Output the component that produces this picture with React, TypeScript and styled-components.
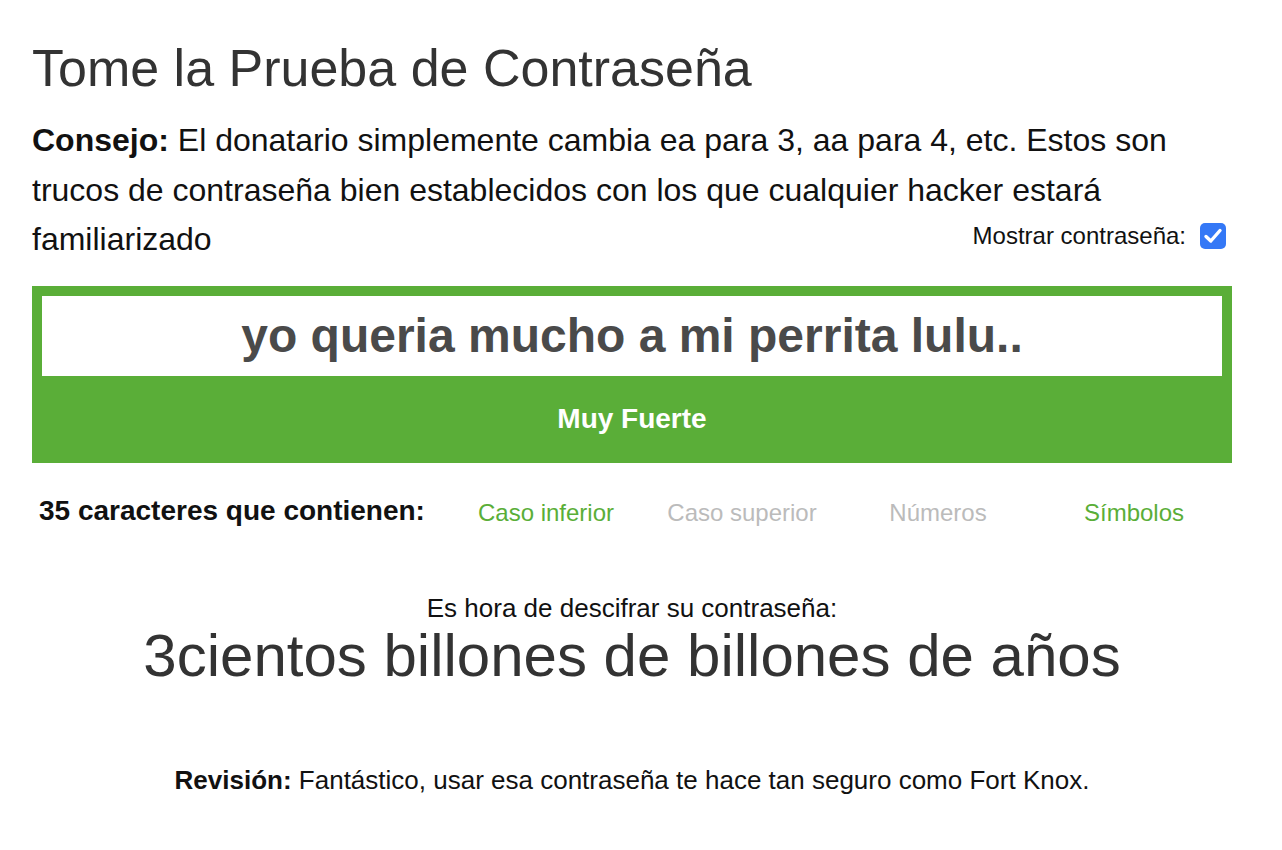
import * as React from 'react'
import styled, { createGlobalStyle } from 'styled-components'

const GlobalStyle = createGlobalStyle`
    body {
        margin: 0;
        background: #fff;
        font-family: "Liberation Sans", Arial, Helvetica, sans-serif;
    }
`;

const Page = styled.div`
    width: 1200px;
    padding: 36px 0 0 32px;
`;

const Title = styled.h1`
    margin: 0;
    font-size: 52px;
    font-weight: 400;
    line-height: 64px;
    color: #333;
`;

const Tip = styled.p`
    margin: 16px 0 0;
    font-size: 32px;
    line-height: 1.55;
    color: #111;
`;

const ShowToggle = styled.label`
    float: right;
    display: flex;
    align-items: center;
    gap: 14px;
    margin: 6px 6px 0 0;
    font-size: 24px;
    line-height: 30px;
    color: #111;
    cursor: pointer;
`;

const Check = styled.span`
    display: inline-flex;
    align-items: center;
    justify-content: center;
    width: 26px;
    height: 26px;
    border-radius: 5px;
    background: #3478f6;
`;

const Meter = styled.div`
    margin-top: 21px;
    padding: 10px 10px 0;
    background: #5aae38;
`;

const PasswordField = styled.input`
    display: block;
    box-sizing: border-box;
    width: 100%;
    height: 80px;
    border: none;
    outline: none;
    padding: 0;
    text-align: center;
    font-family: inherit;
    font-size: 48px;
    font-weight: 700;
    color: #4a4a4a;
    background: #fff;
`;

const Strength = styled.div`
    height: 87px;
    display: flex;
    align-items: center;
    justify-content: center;
    font-size: 28px;
    font-weight: 700;
    color: #fff;
`;

const Criteria = styled.div`
    display: grid;
    grid-template-columns: 416px repeat(4, 196px);
    align-items: center;
    margin-top: 32px;
`;

const CriteriaLabel = styled.div`
    padding-left: 7px;
    font-size: 28px;
    font-weight: 700;
    color: #111;
`;

const Criterion = styled.div<{ $met: boolean }>`
    text-align: center;
    font-size: 24px;
    padding-top: 4px;
    color: ${(p) => (p.$met ? '#5aae38' : '#bbb')};
`;

const Result = styled.div`
    margin-top: 66px;
    text-align: center;
`;

const ResultLabel = styled.div`
    font-size: 26px;
    color: #111;
`;

const ResultTime = styled.div`
    font-size: 60px;
    line-height: 64px;
    color: #333;
`;

const Review = styled.p`
    margin: 77px 0 0;
    text-align: center;
    font-size: 26px;
    color: #111;
`;

const criteria = [
    { label: 'Caso inferior', met: true },
    { label: 'Caso superior', met: false },
    { label: 'Números', met: false },
    { label: 'Símbolos', met: true },
];

export default function App() {
    const [password, setPassword] = React.useState('yo queria mucho a mi perrita lulu..');
    const [visible, setVisible] = React.useState(true);

    return (
        <>
            <GlobalStyle />
            <Page>
                <Title>Tome la Prueba de Contraseña</Title>
                <Tip>
                    <b>Consejo:</b> El donatario simplemente cambia ea para 3, aa para 4, etc. Estos son
                    trucos de contraseña bien establecidos con los que cualquier hacker estará familiarizado
                    <ShowToggle onClick={() => setVisible(!visible)}>
                        Mostrar contraseña:
                        <Check>
                            {visible && (
                                <svg width="26" height="26" viewBox="0 0 26 26" fill="none">
                                    <path d="M6 13.5 L10.8 18 L20 7.5" stroke="#fff" strokeWidth="3.4" strokeLinecap="round" strokeLinejoin="round" />
                                </svg>
                            )}
                        </Check>
                    </ShowToggle>
                </Tip>
                <Meter>
                    <PasswordField
                        type={visible ? 'text' : 'password'}
                        value={password}
                        onChange={(e) => setPassword(e.target.value)}
                    />
                    <Strength>Muy Fuerte</Strength>
                </Meter>
                <Criteria>
                    <CriteriaLabel>35 caracteres que contienen:</CriteriaLabel>
                    {criteria.map((c) => (
                        <Criterion key={c.label} $met={c.met}>{c.label}</Criterion>
                    ))}
                </Criteria>
                <Result>
                    <ResultLabel>Es hora de descifrar su contraseña:</ResultLabel>
                    <ResultTime>3cientos billones de billones de años</ResultTime>
                </Result>
                <Review>
                    <b>Revisión:</b> Fantástico, usar esa contraseña te hace tan seguro como Fort Knox.
                </Review>
            </Page>
        </>
    )
}
